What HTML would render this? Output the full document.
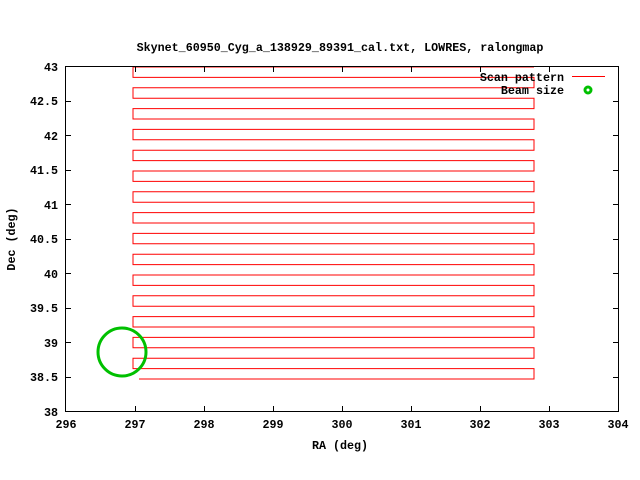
<!DOCTYPE html>
<html><head><meta charset="utf-8"><style>
html,body{margin:0;padding:0;background:#fff;}
svg{display:block;}
text{font-family:"Liberation Mono",monospace;font-weight:bold;font-size:11.7px;fill:#000;}
</style></head><body>
<svg width="640" height="480" xmlns="http://www.w3.org/2000/svg">
<rect width="640" height="480" fill="#fff"/>
<text x="340" y="51" text-anchor="middle">Skynet_60950_Cyg_a_138929_89391_cal.txt, LOWRES, ralongmap</text>
<!-- scan -->
<path fill="none" stroke="#f00" stroke-width="1" d="M534 67 H133 V77.4 H534 V87.8 H133 V98.2 H534 V108.6 H133 V119 H534 V129.4 H133 V139.8 H534 V150.2 H133 V160.6 H534 V171 H133 V181.4 H534 V191.8 H133 V202.2 H534 V212.6 H133 V223 H534 V233.4 H133 V243.8 H534 V254.2 H133 V264.6 H534 V275 H133 V285.4 H534 V295.8 H133 V306.2 H534 V316.6 H133 V327 H534 V337.4 H133 V347.8 H534 V358.2 H133 V368.6 H534 V379 H139"/>
<circle cx="122" cy="352" r="24" fill="none" stroke="#00c000" stroke-width="3"/>
<!-- border -->
<rect x="65.5" y="66.5" width="553" height="345" fill="none" stroke="#000" stroke-width="1"/>
<g stroke="#000" stroke-width="1">
<path d="M135.5 411 v-5 M204.5 411 v-5 M273.5 411 v-5 M342.5 411 v-5 M411.5 411 v-5 M480.5 411 v-5 M549.5 411 v-5
M135.5 67 v5 M204.5 67 v5 M273.5 67 v5 M342.5 67 v5 M411.5 67 v5 M480.5 67 v5 M549.5 67 v5
M66 101.5 h5 M66 135.5 h5 M66 170.5 h5 M66 204.5 h5 M66 239.5 h5 M66 273.5 h5 M66 308.5 h5 M66 342.5 h5 M66 377.5 h5
M618 101.5 h-5 M618 135.5 h-5 M618 170.5 h-5 M618 204.5 h-5 M618 239.5 h-5 M618 273.5 h-5 M618 308.5 h-5 M618 342.5 h-5 M618 377.5 h-5"/>
</g>
<g text-anchor="end">
<text x="58" y="71">43</text><text x="58" y="105">42.5</text><text x="58" y="140">42</text><text x="58" y="174">41.5</text><text x="58" y="209">41</text><text x="58" y="243">40.5</text><text x="58" y="278">40</text><text x="58" y="312">39.5</text><text x="58" y="347">39</text><text x="58" y="381">38.5</text><text x="58" y="416">38</text>
</g>
<g text-anchor="middle">
<text x="66" y="428">296</text><text x="135" y="428">297</text><text x="204" y="428">298</text><text x="273" y="428">299</text><text x="342" y="428">300</text><text x="411" y="428">301</text><text x="480" y="428">302</text><text x="549" y="428">303</text><text x="618" y="428">304</text>
<text x="340" y="449">RA (deg)</text>
<text transform="translate(15,239) rotate(-90)">Dec (deg)</text>
</g>
<text x="564" y="81" text-anchor="end">Scan pattern</text>
<line x1="572" y1="76.5" x2="605" y2="76.5" stroke="#f00"/>
<text x="564" y="94" text-anchor="end">Beam size</text>
<circle cx="588" cy="90" r="3" fill="none" stroke="#00c000" stroke-width="3"/>
</svg>
</body></html>
